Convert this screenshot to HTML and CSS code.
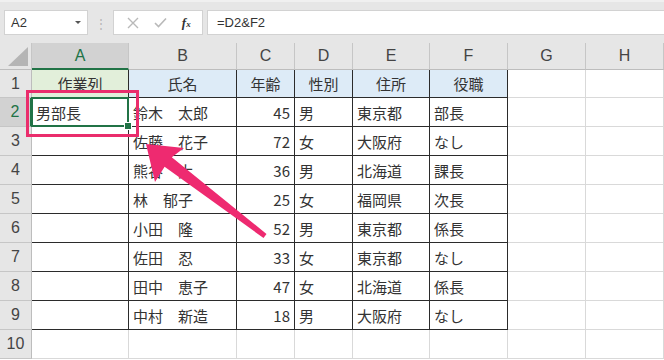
FILE: index.html
```html
<!DOCTYPE html>
<html lang="ja">
<head>
    <meta charset="UTF-8">
    <title>作業列</title>
    <link rel="stylesheet" href="styles.css">
</head>
<body>
    <div class="formula-bar">
        <div class="name-box">
            <span>A2</span>
            <span class="drop"></span>
        </div>
        <div class="grip">⋮</div>
        <div class="fx-box">
            <svg width="12" height="12" viewBox="0 0 12 12"><path d="M1 1 L11 11 M11 1 L1 11" stroke="#b9b9b9" stroke-width="1.4" fill="none"/></svg>
            <svg width="13" height="11" viewBox="0 0 13 11"><path d="M1 6 L4.5 9.5 L12 1.5" stroke="#b9b9b9" stroke-width="1.6" fill="none"/></svg>
            <span class="fx">f<small>x</small></span>
        </div>
        <div class="formula">=D2&amp;F2</div>
    </div>

    <div class="sheet">
        <!-- column headers -->
        <div class="cell hd corner">
            <svg width="22" height="20" viewBox="0 0 22 20"><polygon points="21,0 21,19 1,19" fill="#b5b5b5"/></svg>
        </div>
        <div class="cell hd sel-col">A</div>
        <div class="cell hd">B</div>
        <div class="cell hd">C</div>
        <div class="cell hd">D</div>
        <div class="cell hd">E</div>
        <div class="cell hd">F</div>
        <div class="cell hd">G</div>
        <div class="cell hd">H</div>

        <!-- 1 -->
        <div class="cell rh">1</div>
        <div class="cell bd head-a">作業列</div>
        <div class="cell bd head">氏名</div>
        <div class="cell bd head">年齢</div>
        <div class="cell bd head">性別</div>
        <div class="cell bd head">住所</div>
        <div class="cell bd head">役職</div>
        <div class="cell"></div>
        <div class="cell"></div>

        <!-- 2 -->
        <div class="cell rh sel-row">2</div>
        <div class="cell bd active">男部長</div>
        <div class="cell bd">鈴木　太郎</div>
        <div class="cell bd num">45</div>
        <div class="cell bd">男</div>
        <div class="cell bd">東京都</div>
        <div class="cell bd">部長</div>
        <div class="cell"></div>
        <div class="cell"></div>

        <!-- 3 -->
        <div class="cell rh">3</div>
        <div class="cell bd"></div>
        <div class="cell bd">佐藤　花子</div>
        <div class="cell bd num">72</div>
        <div class="cell bd">女</div>
        <div class="cell bd">大阪府</div>
        <div class="cell bd">なし</div>
        <div class="cell"></div>
        <div class="cell"></div>

        <!-- 4 -->
        <div class="cell rh">4</div>
        <div class="cell bd"></div>
        <div class="cell bd">熊谷　大</div>
        <div class="cell bd num">36</div>
        <div class="cell bd">男</div>
        <div class="cell bd">北海道</div>
        <div class="cell bd">課長</div>
        <div class="cell"></div>
        <div class="cell"></div>

        <!-- 5 -->
        <div class="cell rh">5</div>
        <div class="cell bd"></div>
        <div class="cell bd">林　郁子</div>
        <div class="cell bd num">25</div>
        <div class="cell bd">女</div>
        <div class="cell bd">福岡県</div>
        <div class="cell bd">次長</div>
        <div class="cell"></div>
        <div class="cell"></div>

        <!-- 6 -->
        <div class="cell rh">6</div>
        <div class="cell bd"></div>
        <div class="cell bd">小田　隆</div>
        <div class="cell bd num">52</div>
        <div class="cell bd">男</div>
        <div class="cell bd">東京都</div>
        <div class="cell bd">係長</div>
        <div class="cell"></div>
        <div class="cell"></div>

        <!-- 7 -->
        <div class="cell rh">7</div>
        <div class="cell bd"></div>
        <div class="cell bd">佐田　忍</div>
        <div class="cell bd num">33</div>
        <div class="cell bd">女</div>
        <div class="cell bd">東京都</div>
        <div class="cell bd">なし</div>
        <div class="cell"></div>
        <div class="cell"></div>

        <!-- 8 -->
        <div class="cell rh">8</div>
        <div class="cell bd"></div>
        <div class="cell bd">田中　恵子</div>
        <div class="cell bd num">47</div>
        <div class="cell bd">女</div>
        <div class="cell bd">北海道</div>
        <div class="cell bd">係長</div>
        <div class="cell"></div>
        <div class="cell"></div>

        <!-- 9 -->
        <div class="cell rh">9</div>
        <div class="cell bd"></div>
        <div class="cell bd">中村　新造</div>
        <div class="cell bd num">18</div>
        <div class="cell bd">男</div>
        <div class="cell bd">大阪府</div>
        <div class="cell bd">なし</div>
        <div class="cell"></div>
        <div class="cell"></div>

        <!-- 10 -->
        <div class="cell rh">10</div>
        <div class="cell"></div>
        <div class="cell"></div>
        <div class="cell"></div>
        <div class="cell"></div>
        <div class="cell"></div>
        <div class="cell"></div>
        <div class="cell"></div>
        <div class="cell"></div>
    </div>

    <!-- annotation: box + arrow -->
    <svg class="annot" width="664" height="360" viewBox="0 0 664 360">
        <rect x="27.5" y="91.5" width="110" height="44" fill="none" stroke="#ea2d6c" stroke-width="3"/>
        <polygon fill="#ee2a70" points="146,144 184,148 171.8,157.2 266.5,234 263.5,238 164.6,166.8 155,182"/>
    </svg>
</body>
</html>
```

FILE: styles.css
```css
* { margin: 0; padding: 0; box-sizing: border-box; }
body {
    width: 664px;
    height: 360px;
    overflow: hidden;
    background: #fff;
    font-family: "Noto Sans CJK JP", "Noto Sans", sans-serif;
    color: #333;
    position: relative;
}

/* formula bar */
.formula-bar {
    height: 43px;
    background: #e6e6e6;
    border-top: 2px solid #f0f0f0;
    display: flex;
    align-items: flex-start;
    padding-top: 8px;
    padding-left: 4px;
}
.name-box {
    width: 84px;
    height: 25px;
    background: #fff;
    border: 1px solid #d2d2d2;
    display: flex;
    align-items: center;
    justify-content: space-between;
    padding: 0 6px 0 6px;
    font-family: "Liberation Sans", Arial, sans-serif;
    font-size: 13px;
    color: #333;
}
.drop {
    width: 0;
    height: 0;
    border-left: 3px solid transparent;
    border-right: 3px solid transparent;
    border-top: 3px solid #555;
}
.grip {
    width: 25px;
    height: 25px;
    text-align: center;
    line-height: 25px;
    color: #b5b5b5;
    font-size: 12px;
}
.fx-box {
    width: 90px;
    height: 25px;
    background: #fff;
    border: 1px solid #d2d2d2;
    display: flex;
    align-items: center;
    justify-content: space-around;
    padding: 0 4px 0 6px;
}
.fx {
    font-family: "Liberation Serif", serif;
    font-style: italic;
    font-size: 13px;
    color: #333;
    font-weight: bold;
}
.fx small {
    font-size: 9px;
}
.formula {
    flex: 1;
    height: 25px;
    margin-left: 4px;
    background: #fff;
    border: 1px solid #d2d2d2;
    border-right: none;
    padding-left: 9px;
    line-height: 23px;
    font-family: "Liberation Sans", Arial, sans-serif;
    font-size: 13px;
    color: #333;
}

/* grid */
.sheet {
    display: grid;
    grid-template-columns: 32px 97px 108px 58px 58px 77px 78px 78px 78px;
    grid-template-rows: 27px 28px repeat(9, 29px);
}
.cell {
    border-right: 1px solid #d9d9d9;
    border-bottom: 1px solid #d9d9d9;
    font-size: 15px;
    display: flex;
    align-items: center;
    padding: 0 4px;
    white-space: nowrap;
    position: relative;
}
.hd {
    background: #e6e6e6;
    border-right: 1px solid #c6c6c6;
    border-bottom: 1px solid #bdbdbd;
    justify-content: center;
    font-family: "Liberation Sans", Arial, sans-serif;
    font-size: 16px;
    color: #444;
}
.corner {
    justify-content: flex-end;
    align-items: flex-end;
    padding: 0 2px 2px 0;
}
.sel-col {
    background: #d2d2d2;
    color: #217346;
    border-bottom: 2px solid #217346;
}
.rh {
    background: #e6e6e6;
    border-right: 1px solid #bdbdbd;
    border-bottom: 1px solid #c6c6c6;
    justify-content: center;
    font-family: "Liberation Sans", Arial, sans-serif;
    font-size: 16px;
    color: #444;
    padding: 0;
}
.sel-row {
    background: #d2d2d2;
    color: #217346;
    border-right: 2px solid #217346;
}
.bd {
    border-right: 1px solid #2b2b2b;
    border-bottom: 1px solid #2b2b2b;
}
.head-a {
    background: #e2efda;
    justify-content: center;
}
.head {
    background: #ddebf7;
    justify-content: center;
}
.num {
    justify-content: flex-end;
}
.active::after {
    content: "";
    position: absolute;
    left: -1px;
    top: -1px;
    right: -1px;
    bottom: -1px;
    border: 2px solid #217346;
}
.active::before {
    content: "";
    position: absolute;
    right: -4px;
    bottom: -4px;
    width: 6px;
    height: 6px;
    background: #217346;
    border: 1px solid #fff;
    z-index: 1;
}

/* annotation */
.annot {
    position: absolute;
    left: 0;
    top: 0;
    pointer-events: none;
}
```
